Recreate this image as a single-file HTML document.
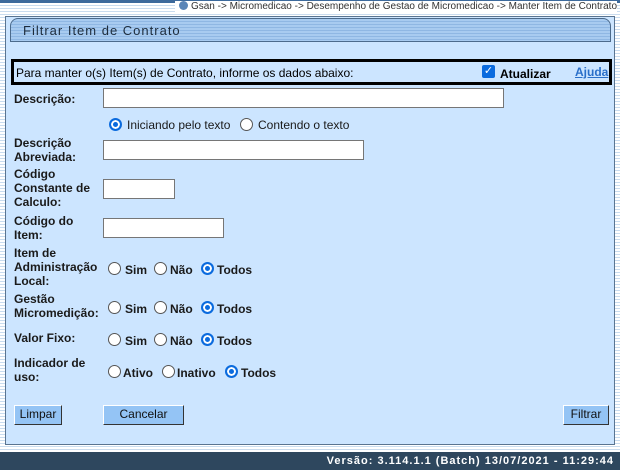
<html><head><style>
*{margin:0;padding:0;box-sizing:border-box}
body{width:620px;height:470px;position:relative;overflow:hidden;background:#fff;font-family:"Liberation Sans",Arial,sans-serif;}
.stripe{position:absolute;left:0;top:0;width:620px;height:452px;background:repeating-linear-gradient(#fff 0 2px,#c9dcef 2px 3px);}
.top{position:absolute;left:0;top:0;width:620px;height:3px;background:#3d6a9c}
.crumb{position:absolute;right:3px;top:1px;font-size:10px;color:#333;background:#fff;padding-left:4px;height:11px;line-height:11px}
.crumb i{display:inline-block;width:9px;height:9px;border-radius:50%;background:#5b86b8;vertical-align:-1px;margin-right:3px}
.panel{position:absolute;left:5px;top:16px;width:610px;height:429px;background:#cce5ff;border:1px solid #5a7490}
.title{position:absolute;left:10px;top:18px;width:601px;height:24px;border:1px solid #4c6b8c;border-radius:8px 8px 0 0;background:repeating-linear-gradient(#a8cbf0 0 2px,#8fb7e3 2px 3px);font-size:13px;letter-spacing:1px;color:#1d2c3c;padding:4px 0 0 12px}
.info{position:absolute;left:11px;top:59px;width:601px;height:26px;border:3px solid #000;font-size:12px;padding:4px 0 0 2px;color:#000}
.lbl{position:absolute;font-size:12px;font-weight:bold;color:#1a1a1a;line-height:14px}
.inp{position:absolute;background:#fff;border:1px solid #767676;height:20px}
.r{position:absolute;width:13px;height:13px;border-radius:50%;border:1px solid #555;background:#fff}
.r.on{border:2px solid #0b6bde;box-shadow:inset 0 0 0 2px #fff;background:#0b6bde}
.t{position:absolute;font-size:12px;font-weight:bold;color:#1a1a1a}
.btn{position:absolute;height:20px;background:#94c4f5;border:1px solid #fff;border-right-color:#333;border-bottom-color:#333;font-size:12px;text-align:center;line-height:17px;color:#111}
.foot{position:absolute;left:0;top:452px;width:620px;height:18px;background:#2e475e;color:#fff;font-size:11px;font-weight:bold;letter-spacing:1px;text-align:right;padding:3px 6px 0 0}
</style></head><body>
<div class="stripe"></div><div class="top"></div>
<div class="crumb"><i></i>Gsan -&gt; Micromedicao -&gt; Desempenho de Gestao de Micromedicao -&gt; Manter Item de Contrato</div>
<div class="panel"></div>
<div class="title">Filtrar Item de Contrato</div>
<div class="info">Para manter o(s) Item(s) de Contrato, informe os dados abaixo:
<span style="position:absolute;left:468px;top:3px;width:13px;height:13px;background:#0b6bde;border-radius:2px;color:#fff;font-size:11px;line-height:13px;text-align:center">✓</span>
<span style="position:absolute;left:486px;top:5px;font-weight:bold;font-size:12px">Atualizar</span>
<span style="position:absolute;left:561px;top:3px;font-weight:bold;font-size:12px;color:#2a6fc9;text-decoration:underline">Ajuda</span></div>

<div class="lbl" style="left:14px;top:92px">Descrição:</div>
<div class="inp" style="left:103px;top:88px;width:401px"></div>
<div class="r on" style="left:109px;top:118px"></div><div class="t" style="left:127px;top:118px;font-weight:normal">Iniciando pelo texto</div>
<div class="r" style="left:240px;top:118px"></div><div class="t" style="left:258px;top:118px;font-weight:normal">Contendo o texto</div>

<div class="lbl" style="left:14px;top:136px">Descrição<br>Abreviada:</div>
<div class="inp" style="left:103px;top:140px;width:261px"></div>
<div class="lbl" style="left:14px;top:167px">Código<br>Constante de<br>Calculo:</div>
<div class="inp" style="left:103px;top:179px;width:72px"></div>
<div class="lbl" style="left:14px;top:214px">Código do<br>Item:</div>
<div class="inp" style="left:103px;top:218px;width:121px"></div>

<div class="lbl" style="left:14px;top:246px">Item de<br>Administração<br>Local:</div>
<div class="r" style="left:108px;top:262px"></div><div class="t" style="left:125px;top:263px">Sim</div>
<div class="r" style="left:154px;top:262px"></div><div class="t" style="left:170px;top:263px">Não</div>
<div class="r on" style="left:201px;top:262px"></div><div class="t" style="left:217px;top:263px">Todos</div>

<div class="lbl" style="left:14px;top:292px">Gestão<br>Micromedição:</div>
<div class="r" style="left:108px;top:301px"></div><div class="t" style="left:125px;top:302px">Sim</div>
<div class="r" style="left:154px;top:301px"></div><div class="t" style="left:170px;top:302px">Não</div>
<div class="r on" style="left:201px;top:301px"></div><div class="t" style="left:217px;top:302px">Todos</div>

<div class="lbl" style="left:14px;top:331px">Valor Fixo:</div>
<div class="r" style="left:108px;top:333px"></div><div class="t" style="left:125px;top:334px">Sim</div>
<div class="r" style="left:154px;top:333px"></div><div class="t" style="left:170px;top:334px">Não</div>
<div class="r on" style="left:201px;top:333px"></div><div class="t" style="left:217px;top:334px">Todos</div>

<div class="lbl" style="left:14px;top:356px">Indicador de<br>uso:</div>
<div class="r" style="left:108px;top:365px"></div><div class="t" style="left:123px;top:366px">Ativo</div>
<div class="r" style="left:162px;top:365px"></div><div class="t" style="left:177px;top:366px">Inativo</div>
<div class="r on" style="left:225px;top:365px"></div><div class="t" style="left:241px;top:366px">Todos</div>

<div class="btn" style="left:14px;top:405px;width:48px">Limpar</div>
<div class="btn" style="left:103px;top:405px;width:81px">Cancelar</div>
<div class="btn" style="left:563px;top:405px;width:46px">Filtrar</div>
<div class="foot">Versão: 3.114.1.1 (Batch) 13/07/2021 - 11:29:44</div>
</body></html>
